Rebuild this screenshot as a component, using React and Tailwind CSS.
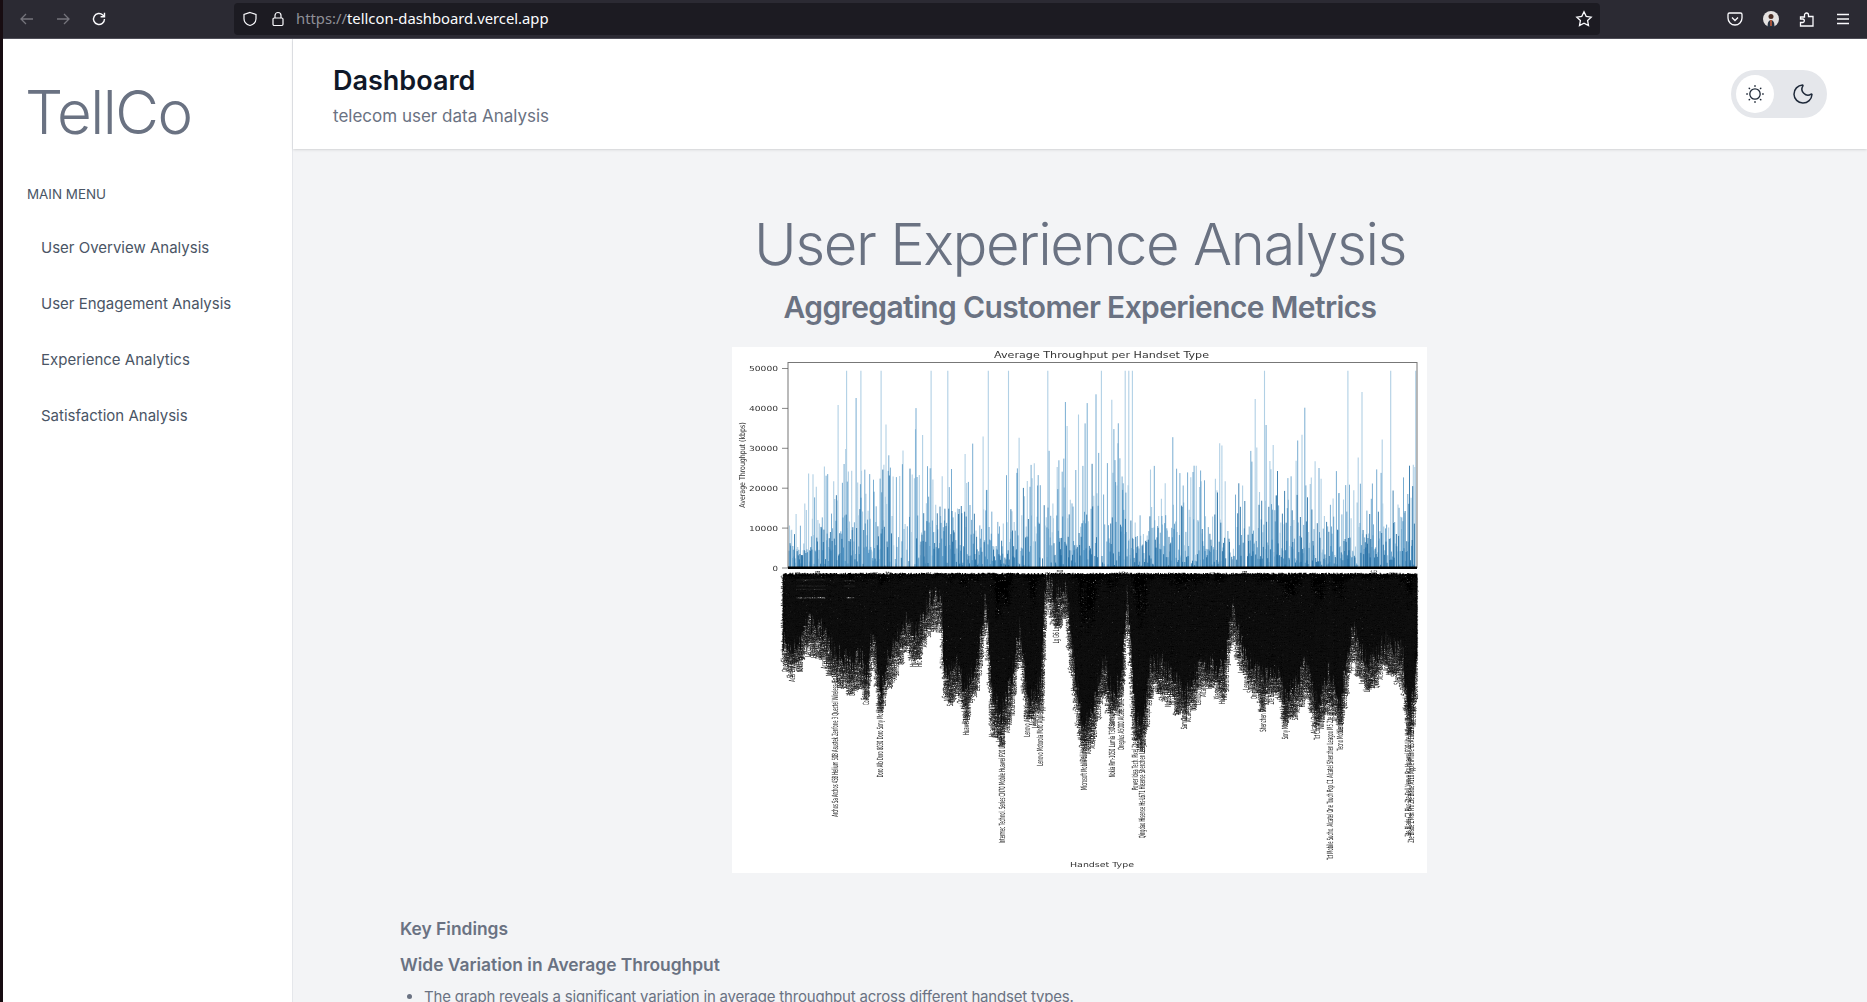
import React from "react";
import { Moon } from "lucide-react";

function rng(seed) {
  let s = seed;
  return () => {
    s = (s * 1664525 + 1013904223) >>> 0;
    return s / 4294967296;
  };
}

const X0 = 732;
const Y0 = 347;
const W = 695;
const H = 526;
const cx = (c) => 780 + c / 2.376 - X0;
const cy = (c) => 560 + c / 3 - Y0;

const profile = [
  [8, 340], [30, 350], [50, 330], [70, 280], [100, 300], [120, 350], [150, 385], [170, 400], [190, 370], [205, 430], [220, 300],
  [240, 480], [260, 370], [300, 280], [320, 310], [345, 250], [360, 200], [385, 200], [390, 440], [420, 400], [440, 480], [470, 400],
  [490, 190], [505, 500], [525, 560], [550, 460], [570, 280], [590, 520], [620, 470], [632, 130], [655, 200], [680, 160], [690, 310],
  [720, 600], [740, 560], [770, 400], [790, 500], [810, 450], [825, 180], [845, 560], [860, 600], [880, 400], [910, 410], [935, 450],
  [965, 490], [1000, 400], [1055, 420], [1075, 230], [1110, 390], [1145, 440], [1170, 420], [1190, 440], [1200, 510], [1225, 470],
  [1250, 400], [1275, 530], [1305, 430], [1330, 520], [1360, 300], [1400, 410], [1440, 340], [1480, 370], [1495, 560], [1515, 400],
];

function depthAt(c) {
  for (let i = 0; i < profile.length - 1; i++) {
    const [a, b] = profile[i];
    const [d, e] = profile[i + 1];
    if (c >= a && c <= d) return b + ((e - b) * (c - a)) / (d - a);
  }
  return 40;
}

const pool = [
  "Samsung Galaxy S8 Sm-G950F", "Huawei P20 Lite Huawei Nova 3E", "Apple iPhone 6S A1688", "Sony Mobile Xperia Xz", "Xiaomi Communica. Mi 5",
  "Lenovo Motorola Moto G5", "Tecno Mobile Limited Camon", "Oneplus A5000", "Nokia Lumia 730", "Lg Nexus 5X", "Htc Desire 626", "Wiko Global Sasu Lenny",
  "Quectel Wireless. Ec25", "Shenzhen Leagoo M5", "Alcatel One Touch Pop", "Zte Blade A110", "Dell Venue Pro", "Acer Liquid Z6", "Asustek Zenfone 3",
];

const deep = [
  ["Archos Sa Archos 45B Helium 50B", 130, 770],
  ["Doro Alb Doro 8030 Doro", 238, 652],
  ["Concord Concept", 205, 435],
  ["Huawei Mate 10 Lite", 443, 525],
  ["Huawei Y6 2017 Honor", 505, 530],
  ["Intermec Technol. Series CN70 Mobile", 527, 850],
  ["Lenovo Motorola Moto", 618, 617],
  ["Lenovo A6000", 588, 530],
  ["Microsoft Mobile Lumia 550 Ds", 722, 690],
  ["Nokia Rm-1050 Lumia 730", 790, 652],
  ["Oneplus A5000", 810, 570],
  ["Power Idea Tech. Pixel", 845, 690],
  ["Qingdao Hisense Hs-L671 Hisense", 860, 835],
  ["Shenzhen Sunmi Mobile", 1148, 515],
  ["Sony Mobile Xperia", 1200, 538],
  ["Tct Comm. Alcatel", 1277, 540],
  ["Tct Mobile Sucho. Alcatel One Touch Pop C1 Alcatel", 1307, 900],
  ["Zte Blade Z Max Pro Zte Blade A110", 1500, 848],
  ["Zte Blade C2 Plus Zte", 1492, 830],
  ["Samsung Galaxy J5", 960, 508],
  ["Tecno Mobile Limited", 1332, 572],
  ["Lg G6 Lg Nexus", 655, 250],
  ["Htc Desire Htc", 330, 320],
  ["Acer Liquid Z6", 30, 365],
];

function buildBars() {
  const r = rng(71);
  const base = 220;
  const scale = 199.5 / 50000;
  const layers = ["", "", ""];
  const spikes = [711, 723, 740, 782, 796, 830, 847, 880, 925, 945, 948, 951, 1062, 1132, 1168, 1189];
  const N = 1150;
  for (let i = 0; i < N; i++) {
    const x = 57 + (i / N) * 627;
    const a = Math.sin(i * 0.052) * 0.5 + Math.sin(i * 0.019 + 1.2) * 0.5;
    if (a < -0.6 && r() < 0.4) continue;
    const u = r() - a * 0.12;
    let v;
    if (u < 0.3) v = 500 + r() * 5000;
    else if (u < 0.66) v = 4000 + r() * 9000;
    else if (u < 0.91) v = 10000 + r() * 16000;
    else v = 20000 + r() * 24000;
    const l = r() < 0.32 ? 0 : r() < 0.5 ? 1 : 2;
    layers[l] += `M${x.toFixed(1)} ${base}V${(base - v * (l === 0 ? 0.6 : 1) * scale).toFixed(1)}`;
  }
  spikes.forEach((s) => {
    const x = s * 1.1907 - X0;
    layers[2] += `M${x.toFixed(1)} ${base}V${(base - 49200 * scale).toFixed(1)}`;
  });
  return layers;
}

function buildMass() {
  const r = rng(9);
  let d = "";
  for (let c = 8; c <= 1515; c += 1.6) {
    const x = cx(c) + (r() - 0.5) * 0.4;
    const end = cy(depthAt(c) - 60 - r() * 70);
    let y = cy(38) + r() * 2;
    while (y < end) {
      const len = 2 + r() * 9;
      const e = Math.min(y + len, end);
      d += `M${x.toFixed(1)} ${y.toFixed(1)}V${e.toFixed(1)}`;
      y = e + (r() < 0.18 ? 0.7 : 0.1);
    }
  }
  return d;
}

function buildLabels() {
  const r = rng(27);
  const out = [];
  const make = (name, c, b, cap) => {
    const total = cy(b) - cy(38);
    const chars = Math.min(Math.round(total / 2.15), cap);
    let s = name;
    while (s.length < chars) s += " " + pool[Math.floor(r() * pool.length)];
    return { s: s.slice(0, chars), x: cx(c) + 2.8, y: cy(b) };
  };
  for (let i = 0; i < 520; i++) {
    const c = 10 + (i / 520) * 1503;
    const b = depthAt(c) + (r() - 0.75) * 70;
    out.push(make(pool[Math.floor(r() * pool.length)], c, b, 60));
  }
  deep.forEach(([t, c, b]) => out.push(make(t, c, b, 140)));
  return out;
}

function Chart() {
  const bars = React.useMemo(buildBars, []);
  const mass = React.useMemo(buildMass, []);
  const labels = React.useMemo(buildLabels, []);
  const font = "'DejaVu Sans', sans-serif";
  return (
    <svg viewBox={`0 0 ${W} ${H}`} width={W} height={H} className="block bg-white blur-[0.4px]">
      <text x="262" y="11" fontSize="8" textLength="215" lengthAdjust="spacingAndGlyphs" fill="#333" fontFamily={font}>
        Average Throughput per Handset Type
      </text>
      <path d={bars[2]} stroke="#1f77b4" strokeOpacity="0.35" strokeWidth="1.1" fill="none" />
      <path d={bars[1]} stroke="#1f77b4" strokeOpacity="0.6" strokeWidth="1" fill="none" />
      <path d={bars[0]} stroke="#16669f" strokeOpacity="0.9" strokeWidth="0.9" fill="none" />
      <rect x="56" y="15.5" width="629" height="205" fill="none" stroke="#777" strokeWidth="1" />
      <rect x="56" y="219.500" width="629" height="2.500" fill="#000" />
      {[50000, 40000, 30000, 20000, 10000, 0].map((t, i) => (
        <g key={t}>
          <text
            x="46"
            y={21.5 + i * 39.9 + 2.5}
            fontSize="7"
            textAnchor="end"
            textLength={t === 0 ? 5.5 : 29}
            lengthAdjust="spacingAndGlyphs"
            fill="#333"
            fontFamily={font}
          >
            {t}
          </text>
          <path d={`M50 ${21.5 + i * 39.9}H56`} stroke="#555" strokeWidth="0.7" />
        </g>
      ))}
      <text transform="translate(13 118) rotate(-90) scale(0.78 1)" fontSize="8" textAnchor="middle" fill="#333" fontFamily={font}>
        Average Throughput (kbps)
      </text>
      <path d={mass} stroke="#000" strokeWidth="1.1" fill="none" />
      <path
        d={`M${cx(38)} ${cy(60)}H${cx(108)}M${cx(38)} ${cy(78)}H${cx(108)}M${cx(38)} ${cy(88)}H${cx(108)}M${cx(152)} ${cy(62)}H${cx(178)}M${cx(152)} ${cy(78)}H${cx(178)}`}
        stroke="#fff"
        strokeOpacity="0.55"
        strokeWidth="0.7"
      />
      <path d={`M${cx(38)} ${cy(113)}H${cx(108)}M${cx(158)} ${cy(113)}H${cx(178)}`} stroke="#fff" strokeWidth="1.5" />
      {labels.map((l, i) => (
        <text key={i} transform={`translate(${l.x.toFixed(1)} ${l.y.toFixed(1)}) rotate(-90) scale(0.44 1)`} fontSize="8.5" fill="#111" fontFamily={font}>
          {l.s}
        </text>
      ))}
      <text x="370" y="520" fontSize="7" textAnchor="middle" textLength="64" lengthAdjust="spacingAndGlyphs" fill="#333" fontFamily={font}>
        Handset Type
      </text>
    </svg>
  );
}

function BrowserBar() {
  return (
    <div className="flex h-[39px] shrink-0 items-center border-b border-[#4f4e58] bg-[#2b2a33] text-[#fbfbfe]">
      <svg width="16" height="16" viewBox="0 0 16 16" fill="none" stroke="#75747c" strokeWidth="1.3" className="ml-[16px]">
        <path d="M14 8H2M7 3L2 8l5 5" />
      </svg>
      <svg width="16" height="16" viewBox="0 0 16 16" fill="none" stroke="#75747c" strokeWidth="1.3" className="ml-[20px]">
        <path d="M2 8h12M9 3l5 5-5 5" />
      </svg>
      <svg width="16" height="16" viewBox="0 0 16 16" fill="none" stroke="#fbfbfe" strokeWidth="1.4" className="ml-[20px]">
        <path d="M13.5 8a5.5 5.5 0 1 1-1.7-4l1.7 1.5M13.5 1.8v3.9H9.6" />
      </svg>
      <div className="ml-[127px] flex h-[32px] w-[1366px] items-center rounded-[4px] bg-[#1c1b22]">
        <svg width="16" height="16" viewBox="0 0 16 16" fill="none" stroke="#fbfbfe" strokeWidth="1.2" className="ml-[8px]">
          <path d="M8 1.5l6 2v4.2c0 3.4-2.6 5.8-6 6.8-3.4-1-6-3.4-6-6.8V3.5z" />
        </svg>
        <svg width="16" height="16" viewBox="0 0 16 16" fill="none" stroke="#fbfbfe" strokeWidth="1.2" className="ml-[12px]">
          <rect x="3" y="7" width="10" height="7.5" rx="1.2" />
          <path d="M5 7V4.5a3 3 0 0 1 6 0V7" />
        </svg>
        <span className="ml-[10px] -translate-y-px font-['Noto_Sans'] text-[14.8px] leading-none">
          <span className="text-[#8f8f96]">https://</span>tellcon-dashboard.vercel.app
        </span>
        <svg width="18" height="18" viewBox="0 0 18 18" fill="none" stroke="#fbfbfe" strokeWidth="1.3" className="ml-auto mr-[7px]">
          <path d="M9 1.8l2.2 4.6 5 .7-3.6 3.5.9 5L9 13.2l-4.5 2.4.9-5L1.800 7.100l5-.7z" />
        </svg>
      </div>
      <svg width="16" height="16" viewBox="0 0 16 16" fill="none" stroke="#fbfbfe" strokeWidth="1.3" className="ml-[127px]">
        <path d="M2.500 2h11A1.500 1.500 0 0 1 15 3.500V7A7 7 0 0 1 1 7V3.500A1.500 1.500 0 0 1 2.500 2z" />
        <path d="M5 6.500l3 3 3-3" />
      </svg>
      <svg width="16" height="16" viewBox="0 0 16 16" className="ml-[20px]">
        <circle cx="8" cy="8" r="8" fill="#e5e2e1" />
        <path d="M4.500 16c0-5 1.500-7 3.500-7s3.500 2 3.500 7z" fill="#26303f" />
        <circle cx="8" cy="5.500" r="2.500" fill="#4a2e25" />
        <rect x="7" y="9" width="2" height="6" fill="#a5533a" />
      </svg>
      <svg width="16" height="16" viewBox="0 0 16 16" fill="none" stroke="#fbfbfe" strokeWidth="1.3" className="ml-[20px]">
        <path d="M1.500 6h4V4a2 2 0 0 1 4 0v1.500h4.500V15H1.500v-3.500h2.500a1.800 1.800 0 0 0 0-3.500H1.500z" />
      </svg>
      <svg width="16" height="16" viewBox="0 0 16 16" fill="none" stroke="#fbfbfe" strokeWidth="1.4" className="ml-[20px]">
        <path d="M2 3.500h12M2 8h12M2 12.500h12" />
      </svg>
    </div>
  );
}

function Sun() {
  return (
    <svg width="18" height="18" viewBox="0 0 18 18" fill="none" stroke="#1f2937" strokeWidth="1.3" strokeLinecap="round">
      <circle cx="9" cy="9" r="5.200" />
      <path d="M9 .8v.5M9 16.700v.5M.8 9h.5M16.700 9h.5M3.200 3.200l.3.3M14.500 14.500l.3.3M3.200 14.800l.3-.3M14.500 3.500l.3-.3" strokeWidth="1.500" />
    </svg>
  );
}

const menu = ["User Overview Analysis", "User Engagement Analysis", "Experience Analytics", "Satisfaction Analysis"];

export default function App() {
  return (
    <div className="flex h-screen w-full overflow-hidden bg-[#170c11] pl-[3px] font-['Inter',sans-serif]">
      <div className="flex min-w-0 flex-1 flex-col">
        <BrowserBar />
        <div className="flex min-h-0 flex-1">
          <aside className="w-[290px] shrink-0 border-r border-gray-200 bg-white">
            <div className="mt-[43px] pl-[22px] text-[60px] font-light leading-[60px] tracking-[-0.025em] text-gray-500">TellCo</div>
            <div className="mt-[42px] pl-[24px] text-[13.4px] leading-[20px] text-gray-600">MAIN MENU</div>
            <nav className="mt-[16px] flex flex-col">
              {menu.map((m) => (
                <a key={m} className="flex h-[56px] items-center pl-[38px] text-[15px] text-gray-600">
                  {m}
                </a>
              ))}
            </nav>
          </aside>
          <div className="flex min-w-0 flex-1 flex-col bg-gray-100">
            <header className="relative z-10 flex h-[110px] shrink-0 items-center justify-between bg-white px-[40px] shadow">
              <div className="translate-y-[2px]">
                <h2 className="text-[27px] font-semibold leading-[32px] text-gray-900">Dashboard</h2>
                <p className="mt-[7px] text-[17px] leading-[24px] text-gray-500">telecom user data Analysis</p>
              </div>
              <div className="flex h-[48px] w-[96px] items-center justify-between rounded-full bg-gray-200 pl-[5px] pr-[12px]">
                <span className="flex h-[38px] w-[38px] items-center justify-center rounded-full bg-white">
                  <Sun />
                </span>
                <Moon size={24} strokeWidth={1.5} className="text-gray-800" />
              </div>
            </header>
            <main className="min-h-0 flex-1 overflow-hidden">
              <h1 className="mt-[65px] text-center text-[58px] font-light leading-[60px] tracking-[-0.025em] text-gray-500">User Experience Analysis</h1>
              <h3 className="mt-[15px] text-center text-[30px] font-semibold leading-[36px] tracking-[-0.021em] text-gray-500">Aggregating Customer Experience Metrics</h3>
              <div className="mt-[22px] flex justify-center pr-[2px]">
                <Chart />
              </div>
              <div className="mx-auto mt-[42px] w-[1360px] text-gray-500">
                <h4 className="text-[17.4px] font-semibold leading-[28px]">Key Findings</h4>
                <h4 className="mt-[8px] text-[17.4px] font-semibold leading-[28px]">Wide Variation in Average Throughput</h4>
                <ul className="mt-[6px] list-disc pl-[24px] text-[15px] leading-[24px] tracking-[-0.013em]">
                  <li>The graph reveals a significant variation in average throughput across different handset types.</li>
                </ul>
              </div>
            </main>
          </div>
        </div>
      </div>
    </div>
  );
}
